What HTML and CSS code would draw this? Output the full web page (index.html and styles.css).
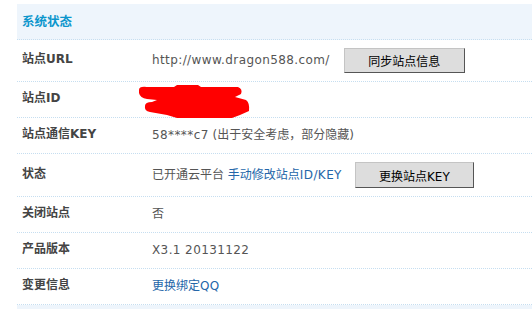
FILE: index.html
```html
<!DOCTYPE html>
<html lang="zh-CN">
<head>
<meta charset="utf-8">
<title>系统状态</title>
<link rel="stylesheet" href="styles.css">
</head>
<body>
<div class="panel">
  <div class="head">系统状态</div>
  <div class="row">
    <div class="label">站点URL</div>
    <div class="value"><span class="en">http://www.dragon588.com/</span><button class="btn btn-a">同步站点信息</button></div>
  </div>
  <div class="row">
    <div class="label">站点ID</div>
    <div class="value redact">
      <svg class="scribble" width="120" height="40" viewBox="130 80 120 40" aria-hidden="true">
        <path fill="#ff0000" d="M137,89 Q137,85 145,86 L172,86 L175,84 L196,84 L199,86 L236,86 Q241,88 239,93 L233,96 L244,99 Q248,102 247,110 L238,114 L230,117 L175,117 L165,114 L148,111 Q142,110 143,105 Q143,101 150,101 L155,99 L145,98 Q138,97 137,92 Z"/>
      </svg>
    </div>
  </div>
  <div class="row">
    <div class="label">站点通信KEY</div>
    <div class="value"><span class="en">58****c7</span> (出于安全考虑，部分隐藏)</div>
  </div>
  <div class="row">
    <div class="label">状态</div>
    <div class="value">已开通云平台 <a class="link" href="#">手动修改站点<span class="en">ID/KEY</span></a><button class="btn btn-b">更换站点KEY</button></div>
  </div>
  <div class="row">
    <div class="label">关闭站点</div>
    <div class="value">否</div>
  </div>
  <div class="row">
    <div class="label">产品版本</div>
    <div class="value"><span class="en">X3.1 20131122</span></div>
  </div>
  <div class="row">
    <div class="label">变更信息</div>
    <div class="value"><a class="link" href="#">更换绑定<span class="en">QQ</span></a></div>
  </div>
  <div class="foot"></div>
</div>
</body>
</html>
```

FILE: styles.css
```css
html, body {
  margin: 0;
  padding: 0;
  background: #ffffff;
}
body {
  font-family: "DejaVu Sans", "Noto Sans CJK SC", sans-serif;
  font-size: 12px;
  color: #555555;
}
.panel {
  padding: 4px 0 0 17px;
}
.head {
  background: #eef5fc;
  height: 35px;
  line-height: 35px;
  padding-left: 5px;
  color: #0c96cc;
  font-weight: bold;
  font-size: 12.5px;
  border-bottom: 1px dotted #c6def0;
}
.row {
  display: grid;
  grid-template-columns: 130px 1fr;
  align-items: center;
  border-bottom: 1px dotted #c6def0;
  min-height: 35px;
}
.row:last-of-type {
  border-bottom: none;
}
.label {
  padding-left: 5px;
  font-weight: bold;
  color: #444444;
  line-height: 19px;
  display: flex;
  align-items: center;
  margin-top: -2px;
}
.value {
  padding: 8px 0 8px 5px;
  line-height: 19px;
  display: flex;
  align-items: center;
  white-space: pre;
}
.en {
  letter-spacing: 0.4px;
}
.link {
  color: #2466a9;
  text-decoration: none;
}
.btn {
  font-family: "DejaVu Sans", "Noto Sans CJK SC", sans-serif;
  font-size: 12px;
  color: #000000;
  background: #dddddd;
  border: 1px solid;
  border-color: #c4c4c4 #555555 #555555 #c4c4c4;
  height: 25px;
  padding: 0;
  margin: 0;
}
.btn-a {
  width: 121px;
  margin-left: 14px;
}
.btn-b {
  width: 119px;
  margin-left: 13px;
  height: 26px;
}
.redact {
  position: relative;
  height: 19px;
}
.scribble {
  position: absolute;
  left: -15px;
  top: -1px;
}
.foot {
  background: #eef5fc;
  height: 10px;
}
```
